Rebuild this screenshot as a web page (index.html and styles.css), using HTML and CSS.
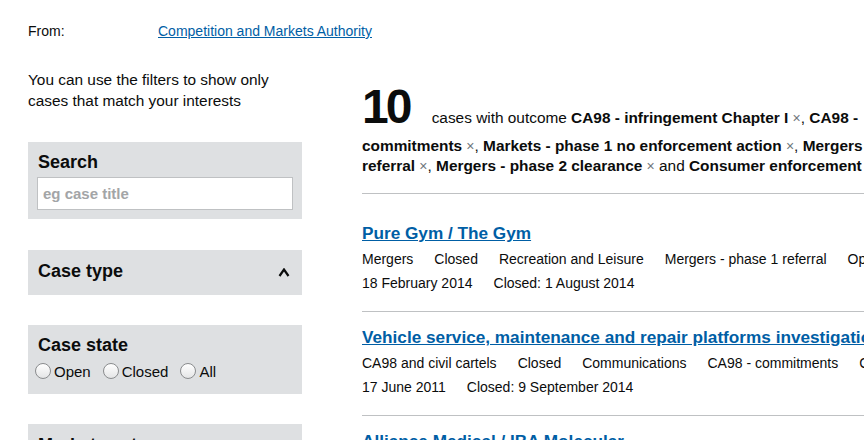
FILE: index.html
```html
<!DOCTYPE html>
<html lang="en">
<head>
<meta charset="utf-8">
<title>Competition and Markets Authority cases</title>
<link rel="stylesheet" href="styles.css">
</head>
<body>
<div class="page">
  <div class="from-row">
    <span class="from-label">From:</span>
    <a class="link" href="#">Competition and Markets Authority</a>
  </div>
  <div class="layout">
    <aside class="filters">
      <p class="intro">You can use the filters to show only cases that match your interests</p>
      <div class="panel panel-search">
        <h2 class="panel-title">Search</h2>
        <input class="search-input" type="text" placeholder="eg case title">
      </div>
      <div class="panel panel-toggle">
        <h2 class="panel-title">Case type</h2>
        <svg class="caret" width="12" height="9" viewBox="0 0 12 9"><polyline points="1.5,8 6,1.5 10.5,8" fill="none" stroke="#0b0c0c" stroke-width="2.2"/></svg>
      </div>
      <div class="panel panel-state">
        <h2 class="panel-title">Case state</h2>
        <div class="radios">
          <label class="radio"><input type="radio" name="state"><span>Open</span></label>
          <label class="radio"><input type="radio" name="state"><span>Closed</span></label>
          <label class="radio"><input type="radio" name="state"><span>All</span></label>
        </div>
      </div>
      <div class="panel panel-toggle">
        <h2 class="panel-title">Market sector</h2>
      </div>
    </aside>
    <main class="results">
      <p class="summary"><span class="count">10</span> cases with outcome <strong>CA98 - infringement Chapter I</strong> <span class="x">×</span>, <strong>CA98 - commitments</strong> <span class="x">×</span>, <strong>Markets - phase 1 no enforcement action</strong> <span class="x">×</span>, <strong>Mergers - phase 1 referral</strong> <span class="x">×</span>, <strong>Mergers - phase 2 clearance</strong> <span class="x">×</span> and <strong>Consumer enforcement - other</strong> <span class="x">×</span></p>
      <ul class="result-list">
        <li class="result">
          <a class="result-title" href="#">Pure Gym / The Gym</a>
          <ul class="meta">
            <li>Mergers</li><li>Closed</li><li>Recreation and Leisure</li><li>Mergers - phase 1 referral</li><li>Opened</li>
          </ul>
          <ul class="meta">
            <li>18 February 2014</li><li>Closed: 1 August 2014</li>
          </ul>
        </li>
        <li class="result">
          <a class="result-title" href="#">Vehicle service, maintenance and repair platforms investigation</a>
          <ul class="meta">
            <li>CA98 and civil cartels</li><li>Closed</li><li>Communications</li><li>CA98 - commitments</li><li>Consumer</li>
          </ul>
          <ul class="meta">
            <li>17 June 2011</li><li>Closed: 9 September 2014</li>
          </ul>
        </li>
        <li class="result">
          <a class="result-title" href="#">Alliance Medical / IBA Molecular</a>
          <ul class="meta">
            <li>Mergers</li><li>Closed</li><li>Healthcare and medical equipment</li><li>Mergers - phase 2 clearance</li>
          </ul>
          <ul class="meta">
            <li>2 May 2014</li><li>Closed: 16 July 2014</li>
          </ul>
        </li>
      </ul>
    </main>
  </div>
</div>
</body>
</html>
```
FILE: styles.css
```css
html, body {
  margin: 0;
  padding: 0;
  overflow: hidden;
  background: #fff;
}
body {
  font-family: "Liberation Sans", Arial, sans-serif;
  color: #0b0c0c;
}
.page {
  width: 960px;
  padding: 21px 0 0 28px;
}
.from-row {
  display: grid;
  grid-template-columns: 130px auto;
  font-size: 14px;
  line-height: 20px;
}
.link {
  color: #005ea5;
  text-decoration: underline;
}
.layout {
  display: grid;
  grid-template-columns: 274px 592px;
  column-gap: 60px;
  margin-top: 28px;
  align-items: start;
}
.intro {
  margin: 0 0 31px;
  font-size: 15.4px;
  line-height: 21px;
}
.panel {
  background: #dee0e2;
  margin-bottom: 30px;
  position: relative;
}
.panel-title {
  margin: 0;
  font-size: 18px;
  line-height: 24px;
  font-weight: bold;
}
.panel-search {
  padding: 8px 9px 9px 10px;
  margin-bottom: 31px;
}
.search-input {
  display: block;
  box-sizing: border-box;
  width: 256px;
  height: 33px;
  margin: 3px 0 0 -1px;
  border: 1px solid #bfc1c3;
  background: #fff;
  padding: 0 5px;
  font-family: inherit;
  font-size: 15px;
}
.search-input::placeholder {
  color: #a3a5a7;
  font-weight: bold;
}
.panel-toggle {
  display: flex;
  justify-content: space-between;
  align-items: center;
  padding: 9px 12px 12px 10px;
}
.caret {
  display: block;
  margin-top: 2px;
}
.panel-state {
  padding: 8px 10px 13px 10px;
}
.radios {
  display: flex;
  gap: 12px;
  margin: 4px 0 0 -3px;
  height: 20px;
  align-items: center;
  font-size: 15px;
}
.radio {
  display: flex;
  align-items: center;
  gap: 3px;
}
.radio input {
  appearance: none;
  -webkit-appearance: none;
  margin: 0;
  width: 16px;
  height: 16px;
  border-radius: 50%;
  border: 1px solid #8a8c8e;
  background: linear-gradient(#ffffff, #e4e5e6);
}
.results {
  min-width: 0;
}
.summary {
  margin: 9px 0 0;
  padding-bottom: 17px;
  border-bottom: 1px solid #bfc1c3;
  font-size: 15.4px;
  line-height: 20px;
}
.count {
  font-size: 48px;
  line-height: 58px;
  font-weight: bold;
  letter-spacing: -3px;
  margin-right: 18px;
}
.x {
  color: #6f777b;
  font-size: 14px;
}
.result-list {
  list-style: none;
  margin: 14px 0 0;
  padding: 0;
}
.result {
  padding: 13px 0 16px;
  border-bottom: 1px solid #bfc1c3;
}
.result-title {
  display: block;
  font-size: 17.2px;
  line-height: 24px;
  font-weight: bold;
  color: #005ea5;
  text-decoration: underline;
  white-space: nowrap;
}
.meta {
  list-style: none;
  margin: 0;
  padding: 0;
  display: flex;
  gap: 21px;
  font-size: 14px;
  line-height: 24px;
  white-space: nowrap;
}
.result-title + .meta {
  margin-top: 2px;
}
```
